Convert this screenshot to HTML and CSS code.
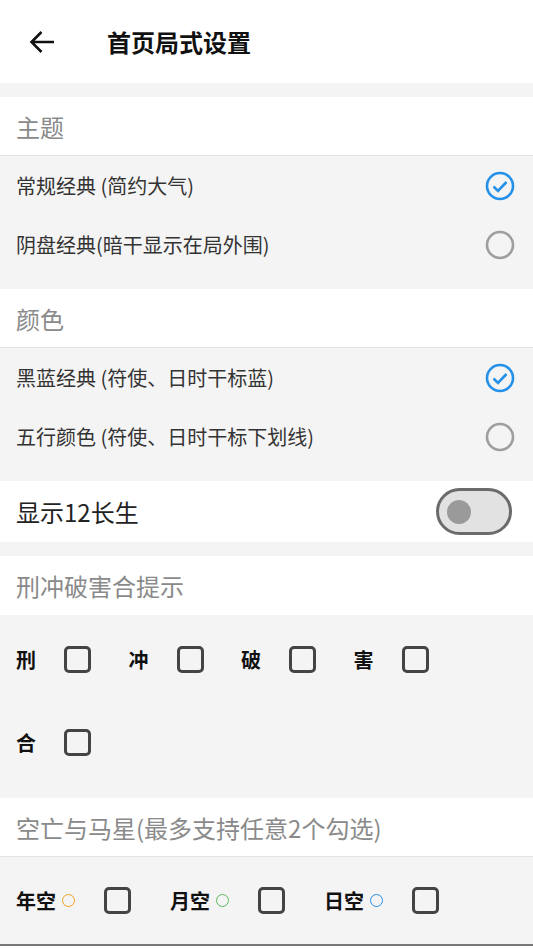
FILE: index.html
```html
<!DOCTYPE html>
<html lang="zh-CN">

<head>
  <meta charset="UTF-8">
  <meta name="viewport" content="width=device-width, initial-scale=1.0">
  <title>首页局式设置</title>
  <link rel="stylesheet" href="styles.css">
</head>

<body>
  <div class="topbar">
    <svg class="back" width="26" height="24" viewBox="0 0 26 24">
      <path d="M25 12H2.5 M12.5 2L2.5 12l10 10" fill="none" stroke="#111" stroke-width="2.6" />
    </svg>
    <h1>首页局式设置</h1>
  </div>

  <div class="gap"></div>

  <div class="section-title line">主题</div>
  <div class="list">
    <div class="row">
      <span>常规经典 (简约大气)</span>
      <svg class="radio" width="30" height="30" viewBox="0 0 30 30">
        <circle cx="15" cy="15" r="13" fill="none" stroke="#2490e8" stroke-width="2.6" />
        <path d="M8.5 15.5l4.5 4.5 8.5-9" fill="none" stroke="#2490e8" stroke-width="2.6" />
      </svg>
    </div>
    <div class="row">
      <span>阴盘经典(暗干显示在局外围)</span>
      <svg class="radio" width="30" height="30" viewBox="0 0 30 30">
        <circle cx="15" cy="15" r="13" fill="none" stroke="#9e9e9e" stroke-width="2.6" />
      </svg>
    </div>
  </div>

  <div class="section-title line">颜色</div>
  <div class="list">
    <div class="row">
      <span>黑蓝经典 (符使、日时干标蓝)</span>
      <svg class="radio" width="30" height="30" viewBox="0 0 30 30">
        <circle cx="15" cy="15" r="13" fill="none" stroke="#2490e8" stroke-width="2.6" />
        <path d="M8.5 15.5l4.5 4.5 8.5-9" fill="none" stroke="#2490e8" stroke-width="2.6" />
      </svg>
    </div>
    <div class="row">
      <span>五行颜色 (符使、日时干标下划线)</span>
      <svg class="radio" width="30" height="30" viewBox="0 0 30 30">
        <circle cx="15" cy="15" r="13" fill="none" stroke="#9e9e9e" stroke-width="2.6" />
      </svg>
    </div>
  </div>

  <div class="switch-row">
    <span>显示12长生</span>
    <div class="switch"><div class="knob"></div></div>
  </div>

  <div class="gap"></div>

  <div class="section-title">刑冲破害合提示</div>
  <div class="checks">
    <div class="check"><b>刑</b><span class="box"></span></div>
    <div class="check"><b>冲</b><span class="box"></span></div>
    <div class="check"><b>破</b><span class="box"></span></div>
    <div class="check"><b>害</b><span class="box"></span></div>
    <div class="check"><b>合</b><span class="box"></span></div>
  </div>

  <div class="section-title line">空亡与马星(最多支持任意2个勾选)</div>
  <div class="kong">
    <div class="kong-item"><b>年空</b><span class="dot orange"></span><span class="box"></span></div>
    <div class="kong-item"><b>月空</b><span class="dot green"></span><span class="box"></span></div>
    <div class="kong-item"><b>日空</b><span class="dot blue"></span><span class="box"></span></div>
  </div>
</body>

</html>
```

FILE: styles.css
```css
body {
  font-family: "Noto Sans CJK SC", Roboto, sans-serif;
  background-color: white;
  margin: 0;
  padding: 0;
  color: #333;
}

.topbar {
  height: 83px;
  display: flex;
  align-items: center;
  padding-left: 29px;
}

.back {
  margin-top: 1px;
}

h1 {
  margin: 0 0 0 52px;
  font-size: 24px;
  font-weight: 700;
  color: #111;
}

.gap {
  height: 14px;
  background-color: #f4f4f4;
}

.section-title {
  height: 59px;
  display: flex;
  align-items: center;
  padding-left: 16px;
  font-size: 24px;
  color: #8a8a8a;
}

.section-title.line {
  height: 58px;
  border-bottom: 1px solid #e4e4e4;
}

.list {
  background-color: #f4f4f4;
  padding-bottom: 15px;
}

.row {
  height: 59px;
  display: flex;
  align-items: center;
  justify-content: space-between;
  padding: 0 18px 0 16px;
  font-size: 20px;
}

.switch-row {
  height: 61px;
  display: flex;
  align-items: center;
  justify-content: space-between;
  padding: 0 21px 0 16px;
  font-size: 24px;
  color: #222;
}

.switch {
  width: 62px;
  height: 41px;
  border: 3px solid #6b6b6b;
  border-radius: 24px;
  background-color: #e2e2e2;
  display: flex;
  align-items: center;
  padding-left: 8px;
}

.knob {
  width: 24px;
  height: 24px;
  border-radius: 50%;
  background-color: #9a9a9a;
}

.checks {
  background-color: #f4f4f4;
  display: grid;
  grid-template-columns: repeat(4, 112.5px);
  grid-auto-rows: 83px;
  padding: 3px 0 14px 16px;
}

.check,
.kong-item {
  display: flex;
  align-items: center;
}

.check b,
.kong-item b {
  font-size: 20px;
  font-weight: 700;
  color: #111;
}

.box {
  width: 21px;
  height: 21px;
  border: 3px solid #444;
  border-radius: 5px;
}

.check .box {
  margin-left: 28px;
}

.kong {
  background-color: #f4f4f4;
  height: 87px;
  display: flex;
  align-items: center;
  padding-left: 16px;
  border-bottom: 2px solid #777;
}

.kong-item {
  width: 154px;
}

.dot {
  width: 11px;
  height: 11px;
  border: 1.5px solid;
  border-radius: 50%;
  margin-left: 6px;
}

.kong-item .box {
  margin-left: 29px;
}

.orange {
  border-color: #f0a020;
}

.green {
  border-color: #5cb85c;
}

.blue {
  border-color: #2a8fe6;
}
```
